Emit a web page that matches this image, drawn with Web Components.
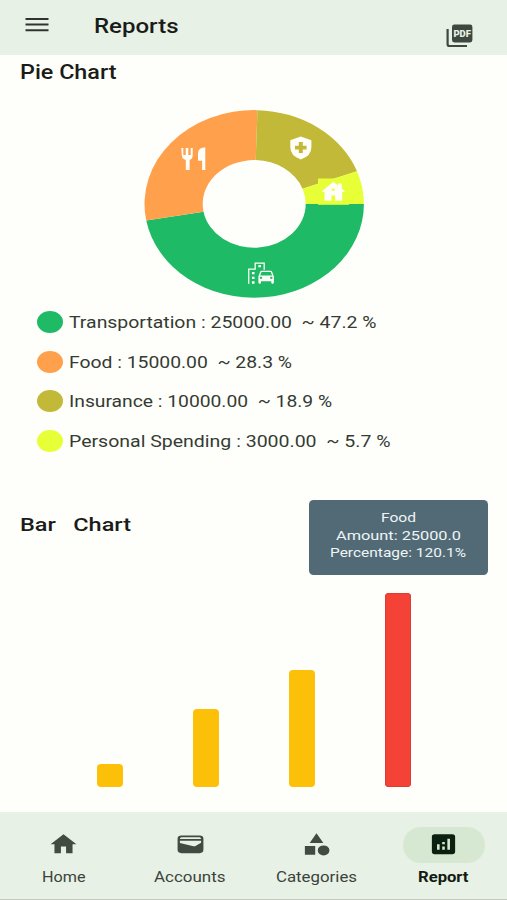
<!DOCTYPE html>
<html lang="en">
<head>
<meta charset="utf-8">
<title>Reports</title>
<style>
    html, body { margin: 0; padding: 0; }
    body { width: 507px; height: 900px; overflow: hidden; font-family: Roboto, "Noto Sans", sans-serif; }
</style>
</head>
<body>
<reports-page></reports-page>

<script>
// Text set to a given width, keeps its own height
class FitText extends HTMLElement {
    constructor() {
        super();
        this.attachShadow({ mode: 'open' });
    }

    connectedCallback() {
        this.shadowRoot.innerHTML = `
            <style>
                :host { display: flex; width: ${this.getAttribute('width')}px; }
                span { flex: none; white-space: pre; transform-origin: 0 50%; }
            </style>
            <span><slot></slot></span>
        `;
        const span = this.shadowRoot.querySelector('span');
        const natural = span.getBoundingClientRect().width;
        span.style.transform = `scaleX(${this.getAttribute('width') / natural})`;
    }
}

class AppBar extends HTMLElement {
    constructor() {
        super();
        this.attachShadow({ mode: 'open' });
    }

    connectedCallback() {
        this.shadowRoot.innerHTML = `
            <style>
                :host {
                    display: flex; box-sizing: border-box; height: 55px;
                    padding: 0 34px 0 25px; background: #e8f1e6; color: #1a1c19;
                }
                .menu { margin-top: 17px; }
                .title { font-size: 20px; line-height: 24px; font-weight: 500; margin: 14px 0 0 44.5px; }
                .pdf { margin: 24px 0 0 auto; }
            </style>
            <svg class="menu" width="24" height="16" viewBox="0 0 24 16" fill="#30342f">
                <path d="M.5 1h23v2H.5zM.5 6.6h23v2H.5zM.5 12.3h23v2H.5z"/>
            </svg>
            <fit-text class="title" width="84.5">Reports</fit-text>
            <svg class="pdf" width="27" height="24" viewBox="0 0 27 24">
                <path d="M1.6 5v15.2q0 1.8 2 1.8H21" fill="none" stroke="#3e483e" stroke-width="2.2"/>
                <rect x="6" y=".6" width="20.4" height="17.8" rx="2.4" fill="#3e483e"/>
                <text x="7.4" y="13" font-size="9.5" font-weight="900" fill="#e8f1e6" textLength="17.6" lengthAdjust="spacingAndGlyphs">PDF</text>
            </svg>
        `;
    }
}

class PieChart extends HTMLElement {
    constructor() {
        super();
        this.attachShadow({ mode: 'open' });
    }

    slice(from, to, color) {
        const point = (deg, rx, ry) => {
            const a = deg * Math.PI / 180;
            return `${254.2 + rx * Math.cos(a)} ${204.4 + ry * Math.sin(a)}`;
        };
        return `<path fill="${color}" d="M${point(from, 109.7, 93.8)}
            A109.7 93.8 0 0 1 ${point(to, 109.7, 93.8)}
            L${point(to, 51.5, 43.8)}
            A51.5 43.8 0 0 0 ${point(from, 51.5, 43.8)}Z"/>`;
    }

    connectedCallback() {
        this.shadowRoot.innerHTML = `
            <style>
                :host { display: block; }
                svg { display: block; }
            </style>
            <svg width="220" height="188" viewBox="144 110.5 220 188">
                ${this.slice(0, 169.8, '#1fba66')}
                ${this.slice(169.8, 271.7, '#ffa04d')}
                ${this.slice(271.7, 339.6, '#c2b939')}
                ${this.slice(339.6, 360, '#e6ff37')}
                <path d="M318 179h31v26.3h-31z" fill="#e6ff37"/>
                <g fill="#fffef8">
                    <path d="M181 148.5h2v7h2.4v-7h2.6v7h2.4v-7h2v7q0 4-3.1 5v10h-3.8v-10q-4-1-4-5z" transform="translate(.3)"/>
                    <path d="M205.3 148v22.5h-3.2v-9.3H198v-7.4q0-5.8 7.3-5.8z"/>
                    <path fill-rule="evenodd" d="M300.8 137l10.6 3.7v7q0 8.6-10.6 12.2-10.5-3.6-10.5-12.2v-7zM298.8 142.6v3.6h-3.8v3.7h3.8v3.6h4v-3.6h3.8v-3.7h-3.8v-3.6z"/>
                    <path fill-rule="evenodd" d="M333.3 182.3l4.9 3.8v-2h3.6v5l3.4 3.2h-3v8.9h-7v-5.2h-3.7v5.2h-7v-8.9h-3zM331.3 191h4q-.2-2.1-2-2.1t-2 2.1z"/>
                    <g transform="translate(245.5 259.6) scale(1.29 1.17)">
                        <path d="M20.57 10.66C20.43 10.26 20.05 10 19.6 10h-7.19c-.46 0-.83.26-.98.66L10 14.77l.01 5.51c0 .38.31.72.69.72h.62c.38 0 .68-.38.68-.76V19h8v1.24c0 .38.31.76.69.76h.61c.38 0 .69-.34.69-.72l.01-1.37v-4.14l-1.43-4.11zM12.41 11h7.19l1.03 3h-9.25l1.03-3zM12 17c-.55 0-1-.45-1-1s.45-1 1-1 1 .45 1 1-.45 1-1 1zm8 0c-.55 0-1-.45-1-1s.45-1 1-1 1 .45 1 1-.45 1-1 1z"/>
                        <path d="M14 9h1V3H7v5H2v13h1V9h5V4h6zM5 11h2v2H5zM10 5h2v2h-2zM5 15h2v2H5zM5 19h2v2H5z"/>
                    </g>
                </g>
            </svg>
        `;
    }
}

class LegendRow extends HTMLElement {
    constructor() {
        super();
        this.attachShadow({ mode: 'open' });
    }

    connectedCallback() {
        this.shadowRoot.innerHTML = `
            <style>
                :host { display: flex; align-items: center; gap: 6.3px; height: 39.6px; color: #353a34; font-size: 16px; line-height: 20px; }
                .dot { width: 26px; height: 22px; border-radius: 50%; background: ${this.getAttribute('color')}; }
                fit-text { padding-top: 2px; }
            </style>
            <div class="dot"></div>
            <fit-text width="${this.getAttribute('width')}">${this.textContent}</fit-text>
        `;
    }
}

class BarChart extends HTMLElement {
    constructor() {
        super();
        this.attachShadow({ mode: 'open' });
    }

    connectedCallback() {
        const bars = this.getAttribute('values').split(',');
        this.shadowRoot.innerHTML = `
            <style>
                :host { display: flex; align-items: flex-end; gap: 70px; height: 195px; position: relative; }
                .bar { width: 26px; border-radius: 4px; background: #fdc009; }
                .bar.active { background: #f44236; box-shadow: inset 0 0 0 .5px #c5372d; }
                .tooltip {
                    position: absolute; left: 212px; top: -92px;
                    box-sizing: border-box; width: 178.5px; height: 75px; padding-top: 9px;
                    display: flex; flex-direction: column; align-items: center;
                    border-radius: 4.5px; background: #526a76; color: #eff5f7;
                    font-size: 13px; line-height: 17.5px;
                }
            </style>
            ${bars.map((h, i) => `<div class="bar ${i === bars.length - 1 ? 'active' : ''}" style="height: ${h}px"></div>`).join('')}
            <div class="tooltip">
                <fit-text width="35">Food</fit-text>
                <fit-text width="125">Amount: 25000.0</fit-text>
                <fit-text width="136">Percentage: 120.1%</fit-text>
            </div>
        `;
    }
}

class NavItem extends HTMLElement {
    constructor() {
        super();
        this.attachShadow({ mode: 'open' });
    }

    connectedCallback() {
        const icons = {
            home: '<path d="M10 20v-6h4v6h5v-8h3L12 3 2 12h3v8z"/>',
            wallet: '<path fill-rule="evenodd" d="M5 4h14q3 0 3 3v10q0 3-3 3H5q-3 0-3-3V7q0-3 3-3zM5.1 5.7Q3.8 5.7 3.8 7.2h16.4q0-1.5-1.3-1.5zM3.8 8.8v2.1l10.5 2.8q1 .3 1.9-.4l4-2.7V8.8z"/>',
            category: '<path d="M12 2l-5.3 8.9h10.6zM3 13.5h8v8H3z"/><circle cx="17.5" cy="17.5" r="4.5"/>',
            analytics: '<path d="M19 3H5c-1.1 0-2 .9-2 2v14c0 1.1.9 2 2 2h14c1.1 0 2-.9 2-2V5c0-1.1-.9-2-2-2zM9 17H7v-5h2v5zm4 0h-2v-3h2v3zm0-5h-2v-2h2v2zm4 5h-2V7h2v10z"/>'
        };
        const active = this.hasAttribute('active');
        this.shadowRoot.innerHTML = `
            <style>
                :host {
                    display: flex; flex: 1; flex-direction: column; align-items: center;
                    padding-top: 14.5px; color: ${active ? '#121c12' : '#3b433b'};
                    font-size: 14px; line-height: 18px; font-weight: ${active ? 700 : 400};
                }
                .pill {
                    display: flex; align-items: center; justify-content: center;
                    width: 82px; height: 36px; border-radius: 18px;
                    background: ${active ? '#d6e8d1' : 'transparent'};
                }
                .label { margin-top: 5px; }
            </style>
            <div class="pill">
                <svg width="31" height="26.6" viewBox="0 0 24 24" preserveAspectRatio="none" fill="${active ? '#0b200e' : '#414b41'}">
                    ${icons[this.getAttribute('icon')]}
                </svg>
            </div>
            <fit-text class="label" width="${this.getAttribute('width')}">${this.textContent}</fit-text>
        `;
    }
}

class NavBar extends HTMLElement {
    constructor() {
        super();
        this.attachShadow({ mode: 'open' });
    }

    connectedCallback() {
        this.shadowRoot.innerHTML = `
            <style>
                :host { display: flex; box-sizing: border-box; height: 88px; background: #e8f1e5; border-bottom: 1px solid #c3c9c0; }
            </style>
            <slot></slot>
        `;
    }
}

class ReportsPage extends HTMLElement {
    constructor() {
        super();
        this.attachShadow({ mode: 'open' });
    }

    connectedCallback() {
        this.shadowRoot.innerHTML = `
            <style>
                :host { display: flex; flex-direction: column; height: 900px; background: #fefffa; color: #1a1c19; }
                main { flex: 1; display: flex; flex-direction: column; }
                .heading { font-weight: 500; line-height: 24px; }
                .pie { font-size: 20px; margin: 4.5px 0 0 19.8px; }
                .bars { font-size: 19px; margin: 52.5px 0 0 19.8px; }
                pie-chart { margin: 26.5px 0 0 144px; }
                .legend { margin: 4.3px 0 0 36.5px; }
                bar-chart { margin: 55.2px 0 0 97px; }
            </style>
            <app-bar></app-bar>
            <main>
                <fit-text class="heading pie" width="96.5">Pie Chart</fit-text>
                <pie-chart></pie-chart>
                <div class="legend">
                    <legend-row color="#1fba66" width="307.5">Transportation : 25000.00  ~ 47.2 %</legend-row>
                    <legend-row color="#ffa04d" width="223">Food : 15000.00  ~ 28.3 %</legend-row>
                    <legend-row color="#c2b939" width="263">Insurance : 10000.00  ~ 18.9 %</legend-row>
                    <legend-row color="#e6ff37" width="321.5">Personal Spending : 3000.00  ~ 5.7 %</legend-row>
                </div>
                <fit-text class="heading bars" width="111">Bar   Chart</fit-text>
                <bar-chart values="23,78,117,194.5"></bar-chart>
            </main>
            <nav-bar>
                <nav-item icon="home" width="43.5">Home</nav-item>
                <nav-item icon="wallet" width="71.5">Accounts</nav-item>
                <nav-item icon="category" width="81">Categories</nav-item>
                <nav-item icon="analytics" width="50.5" active>Report</nav-item>
            </nav-bar>
        `;
    }
}

customElements.define('fit-text', FitText);
customElements.define('app-bar', AppBar);
customElements.define('pie-chart', PieChart);
customElements.define('legend-row', LegendRow);
customElements.define('bar-chart', BarChart);
customElements.define('nav-item', NavItem);
customElements.define('nav-bar', NavBar);
customElements.define('reports-page', ReportsPage);
</script>
</body>
</html>
